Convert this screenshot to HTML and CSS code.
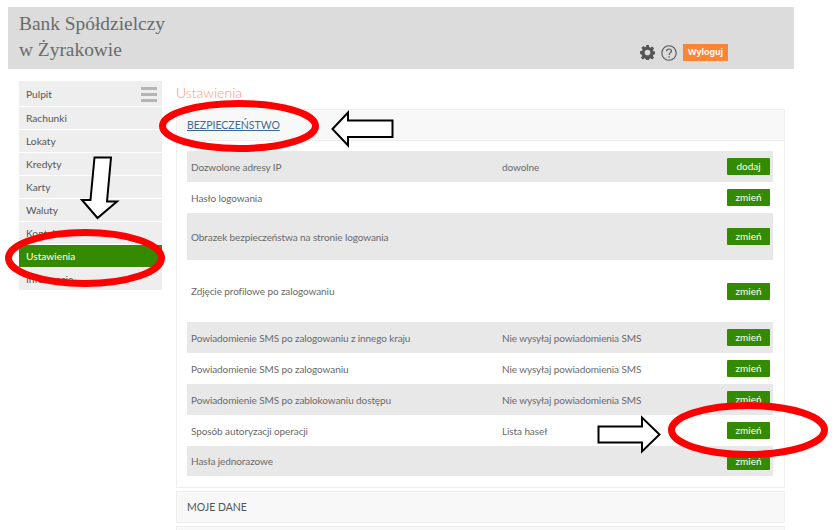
FILE: index.html
```html
<!DOCTYPE html>
<html lang="pl">
<head>
<meta charset="utf-8">
<title>Ustawienia</title>
<link rel="stylesheet" href="styles.css">
</head>
<body>
<div class="page">
  <header class="top">
    <h1 class="brand">Bank Spółdzielczy<br>w Żyrakowie</h1>
    <div class="tools">
      <svg class="ico gear" width="15" height="15" viewBox="0 0 16 16"><path fill="#555" fill-rule="evenodd" d="M6.600 0h2.800l.4 2.200 1.300.6 1.900-1.300 2 2-1.300 1.900.6 1.300 2.200.4v2.800l-2.200.4-.6 1.300 1.300 1.900-2 2-1.900-1.300-1.300.6-.4 2.200H6.600l-.4-2.200-1.300-.6-1.900 1.300-2-2 1.300-1.900-.6-1.300L0 9.400V6.600l2.200-.4.6-1.300-1.300-1.900 2-2 1.900 1.300 1.300-.6zM8 5a3 3 0 1 0 0 6 3 3 0 0 0 0-6z"/></svg>
      <svg class="ico" width="16" height="16" viewBox="0 0 16 16"><circle cx="8" cy="8" r="7.200" fill="none" stroke="#555" stroke-width="1.100"/><path d="M5.600 6.200C5.700 4.700 6.700 4 8 4c1.400 0 2.400.8 2.400 2 0 1.900-2.300 1.900-2.300 4" fill="none" stroke="#555" stroke-width="1.200"/><circle cx="8.100" cy="12" r=".8" fill="#555"/></svg>
      <a class="logout">Wyloguj</a>
    </div>
  </header>
  <div class="content">
    <nav class="side">
      <div class="item first">Pulpit<span class="burger"><i></i><i></i><i></i></span></div>
      <div class="item">Rachunki</div>
      <div class="item">Lokaty</div>
      <div class="item">Kredyty</div>
      <div class="item">Karty</div>
      <div class="item">Waluty</div>
      <div class="item">Kontakt</div>
      <div class="item active">Ustawienia</div>
      <div class="item">Informacje</div>
    </nav>
    <main class="main">
      <h2 class="title">Ustawienia</h2>
      <section class="panel">
        <div class="panel-head"><a class="link">BEZPIECZEŃSTWO</a></div>
        <div class="panel-body">
          <div class="row gray h31"><span>Dozwolone adresy IP</span><span>dowolne</span><a class="btn">dodaj</a></div>
          <div class="row h31"><span>Hasło logowania</span><span></span><a class="btn">zmień</a></div>
          <div class="row gray h47"><span>Obrazek bezpieczeństwa na stronie logowania</span><span></span><a class="btn">zmień</a></div>
          <div class="row h62"><span>Zdjęcie profilowe po zalogowaniu</span><span></span><a class="btn">zmień</a></div>
          <div class="row gray h31"><span>Powiadomienie SMS po zalogowaniu z innego kraju</span><span>Nie wysyłaj powiadomienia SMS</span><a class="btn">zmień</a></div>
          <div class="row h31"><span>Powiadomienie SMS po zalogowaniu</span><span>Nie wysyłaj powiadomienia SMS</span><a class="btn">zmień</a></div>
          <div class="row gray h31"><span>Powiadomienie SMS po zablokowaniu dostępu</span><span>Nie wysyłaj powiadomienia SMS</span><a class="btn">zmień</a></div>
          <div class="row h31"><span>Sposób autoryzacji operacji</span><span>Lista haseł</span><a class="btn">zmień</a></div>
          <div class="row gray h30"><span>Hasła jednorazowe</span><span></span><a class="btn">zmień</a></div>
        </div>
      </section>
      <section class="panel"><div class="panel-head">MOJE DANE</div></section>
      <section class="panel"><div class="panel-head"></div></section>
    </main>
  </div>
  <svg class="marks" width="837" height="530" viewBox="0 0 837 530">
    <g fill="none" stroke="#f00" stroke-width="7">
      <ellipse cx="239" cy="126" rx="76.500" ry="22.500"/>
      <ellipse cx="85" cy="258" rx="76.500" ry="25.500"/>
      <ellipse cx="748" cy="430" rx="76.500" ry="24.500"/>
    </g>
    <g fill="#fff" stroke="#000" stroke-width="2">
      <path d="M332.500 129L348 112.500V120.500H392.500V137H348V145.500Z"/>
      <path d="M94.500 157.500H111L107 201.500H117L97.500 218L82 200H90.500Z"/>
      <path d="M598.500 426.500H642V417.500L659.500 434.500L642 451.500V442.500H598.500Z"/>
    </g>
  </svg>
</div>
</body>
</html>
```
FILE: styles.css
```css
* { box-sizing: border-box; }
html, body { margin: 0; padding: 0; background: #fff; }
.page {
  position: relative;
  width: 837px;
  height: 530px;
  overflow: hidden;
  font-family: Lato, "Open Sans", sans-serif;
  font-size: 10px;
  color: #666;
}
.top {
  margin: 7px 43px 0 8px;
  height: 62px;
  background: #dcdcdc;
  display: flex;
  justify-content: space-between;
  padding: 4px 66px 8px 11px;
}
.brand {
  margin: 0;
  font-family: "Liberation Serif", serif;
  font-weight: 400;
  font-size: 19.400px;
  line-height: 26px;
  color: #6b6b6b;
}
.tools { display: flex; align-items: flex-end; gap: 6px; }
.ico { display: block; }
.gear { margin-bottom: 1px; }
.logout {
  width: 45px;
  height: 17px;
  background: #fb8534;
  color: #fff;
  font-family: "Liberation Sans", sans-serif;
  font-weight: 700;
  font-size: 9px;
  line-height: 17px;
  text-align: center;
}
.content {
  display: flex;
  align-items: flex-start;
  margin: 12px 52px 0 19px;
  gap: 14px;
}
.side { width: 143px; flex: none; display: flex; flex-direction: column; gap: 1px; }
.item {
  position: relative;
  height: 22px;
  line-height: 23px;
  padding-left: 7px;
  background: #eee;
  color: #555;
  font-size: 10.200px;
}
.item.first { height: 25px; line-height: 27px; }
.item.active { background: #348a00; color: #fff; }
.burger {
  position: absolute;
  right: 5px;
  top: 6px;
  display: flex;
  flex-direction: column;
  gap: 3px;
}
.burger i { display: block; width: 16px; height: 3px; background: #b5b5b5; }
.main { flex: 1; min-width: 0; }
.title {
  margin: 0;
  height: 28px;
  font-weight: 300;
  font-size: 14px;
  line-height: 23px;
  color: #fb9a70;
}
.panel {
  border: 1px solid #eee;
  margin-bottom: 3px;
}
.panel-head {
  height: 30px;
  background: #f8f8f8;
  padding-left: 10px;
  line-height: 31px;
  font-size: 10.500px;
  color: #555;
}
.link { color: #3d6a94; text-decoration: underline; }
.panel-body {
  border-top: 1px solid #eee;
  padding: 10px 11px 11px 10px;
  display: flex;
  flex-direction: column;
}
.row {
  display: grid;
  grid-template-columns: 311px 1fr auto;
  align-items: center;
  padding: 0 3px 0 4px;
  color: #6a6a6a;
  letter-spacing: -.1px;
}
.gray { background: #e8e8e8; }
.h30 { height: 30px; }
.h31 { height: 31px; }
.h47 { height: 47px; }
.h62 { height: 62px; }
.btn {
  width: 43px;
  height: 17px;
  line-height: 17px;
  text-align: center;
  background: #348a00;
  color: #fff;
  border-radius: 1px;
  letter-spacing: 0;
}
.marks { position: absolute; left: 0; top: 0; pointer-events: none; }
```
